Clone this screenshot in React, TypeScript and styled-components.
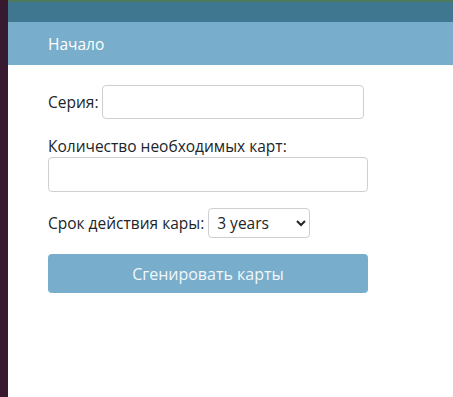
import React from "react";
import styled, { createGlobalStyle } from "styled-components";

const GlobalStyle = createGlobalStyle`
  html, body {
    margin: 0;
    padding: 0;
    height: 100%;
    background: #ffffff;
  }
  #root {
    height: 100%;
  }
`;

const Screen = styled.div`
  display: flex;
  height: 397px;
  font-family: "Open Sans", "Noto Sans", sans-serif;
  color: #212529;
`;

const SideStrip = styled.div`
  width: 8px;
  flex-shrink: 0;
  background: #371a2f;
`;

const Main = styled.div`
  flex: 1;
  display: flex;
  flex-direction: column;
`;

const TopBar = styled.div`
  height: 20px;
  background: #3f7690;
  border-top: 2px solid #4d7a5c;
`;

const NavBar = styled.nav`
  height: 43px;
  display: flex;
  align-items: center;
  padding-left: 40px;
  background: #78aecb;
  color: #ffffff;
  font-size: 15.5px;
`;

const Form = styled.form`
  display: flex;
  flex-direction: column;
  width: 320px;
  padding: 20px 0 0 40px;
`;

const InlineRow = styled.div<{ $mt: number; $mb: number }>`
  display: flex;
  align-items: center;
  gap: 4px;
  margin-top: ${(p) => p.$mt}px;
  margin-bottom: ${(p) => p.$mb}px;
`;

const Label = styled.label`
  font-size: 15.5px;
  line-height: 20px;
`;

const BlockLabel = styled(Label)`
  display: block;
  margin-bottom: 1px;
`;

const TextInput = styled.input<{ $w: number; $h: number }>`
  box-sizing: border-box;
  width: ${(p) => p.$w}px;
  height: ${(p) => p.$h}px;
  border: 1px solid #cfcfcf;
  border-radius: 4px;
  padding: 4px 8px;
  font: inherit;
  font-size: 15px;
  outline: none;
`;

const Select = styled.select`
  box-sizing: border-box;
  width: 102px;
  height: 30px;
  border: 1px solid #cfcfcf;
  border-radius: 4px;
  padding: 0 4px;
  background: #ffffff;
  color: #212529;
  font-family: inherit;
  font-size: 15.5px;
`;

const Submit = styled.button`
  box-sizing: border-box;
  width: 320px;
  height: 39px;
  margin-top: 16px;
  border: none;
  border-radius: 4px;
  background: #78aecb;
  color: #f2f7fa;
  font-family: inherit;
  font-size: 16px;
`;

export default function App() {
  return (
    <Screen>
      <GlobalStyle />
      <SideStrip />
      <Main>
        <TopBar />
        <NavBar>Начало</NavBar>
        <Form onSubmit={(e) => e.preventDefault()}>
          <InlineRow $mt={0} $mb={17}>
            <Label htmlFor="series">Серия:</Label>
            <TextInput id="series" $w={262} $h={34} />
          </InlineRow>
          <BlockLabel htmlFor="count">Количество необходимых карт:</BlockLabel>
          <TextInput id="count" $w={320} $h={35} />
          <InlineRow $mt={16} $mb={0}>
            <Label htmlFor="term">Срок действия кары:</Label>
            <Select id="term" defaultValue="3">
              <option value="1">1 year</option>
              <option value="2">2 years</option>
              <option value="3">3 years</option>
            </Select>
          </InlineRow>
          <Submit type="submit">Сгенировать карты</Submit>
        </Form>
      </Main>
    </Screen>
  );
}
